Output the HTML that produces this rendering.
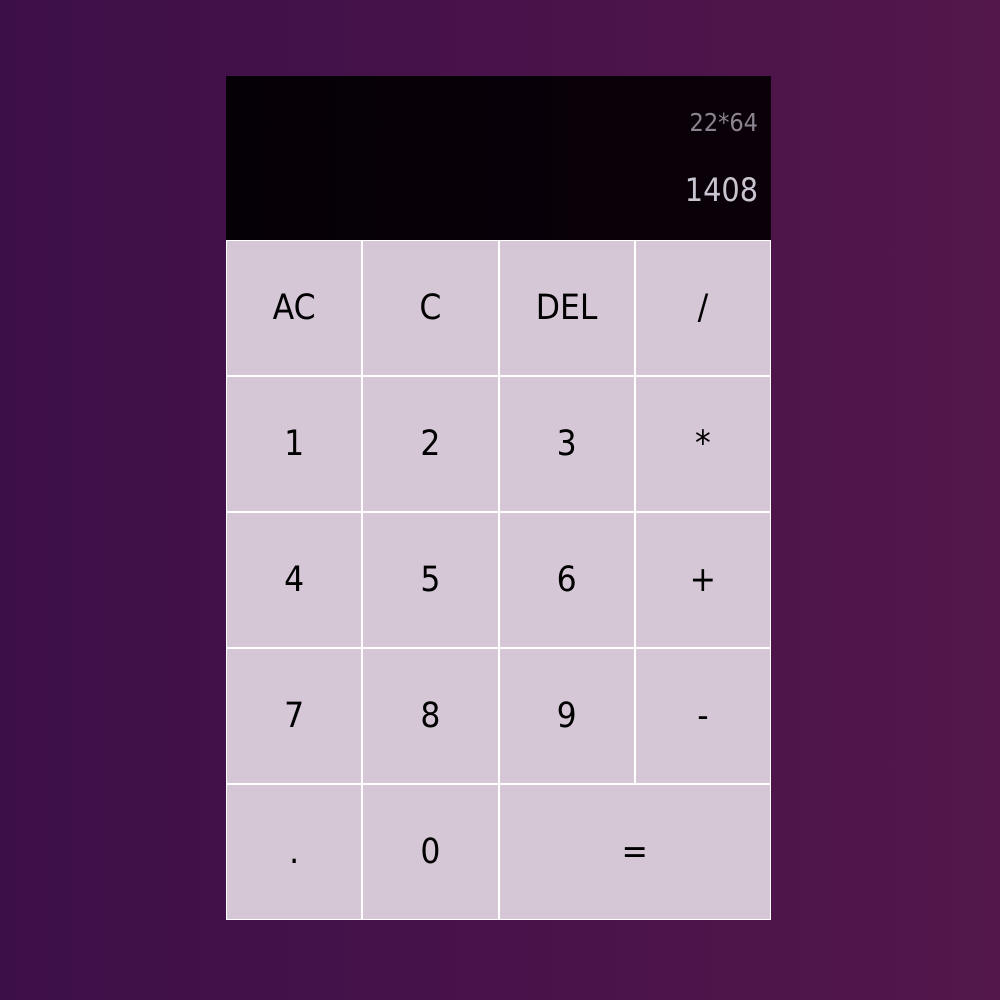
<!DOCTYPE html>
<html><head><meta charset="utf-8"><style>
html,body{margin:0;height:100%}
body{width:1000px;height:1000px;background:linear-gradient(to right,#3d0f49,#53174b);font-family:"DejaVu Sans Condensed","DejaVu Sans","Liberation Sans",sans-serif;position:relative;overflow:hidden}
.calc{position:absolute;left:226px;top:76px;width:545px;display:grid;grid-template-columns:repeat(4,136.25px);grid-template-rows:164px repeat(5,136px)}
.disp{grid-column:1/-1;background:linear-gradient(to right,#050006,#0b0009);position:relative}
.prev{position:absolute;right:13px;top:32px;color:#8a8490;font-size:25px;line-height:30px}
.cur{position:absolute;right:13px;top:94px;color:#c8c4d0;font-size:32px;line-height:40px}
button{background:#d5c7d5;border:1px solid #fff;font-family:inherit;font-size:35px;color:#000;padding:0;margin:0}
.two{grid-column:span 2}
</style></head><body>
<div class="calc">
<div class="disp"><div class="prev">22*64</div><div class="cur">1408</div></div>
<button>AC</button><button>C</button><button>DEL</button><button>/</button>
<button>1</button><button>2</button><button>3</button><button>*</button>
<button>4</button><button>5</button><button>6</button><button>+</button>
<button>7</button><button>8</button><button>9</button><button>-</button>
<button>.</button><button>0</button><button class="two">=</button>
</div>
</body></html>
